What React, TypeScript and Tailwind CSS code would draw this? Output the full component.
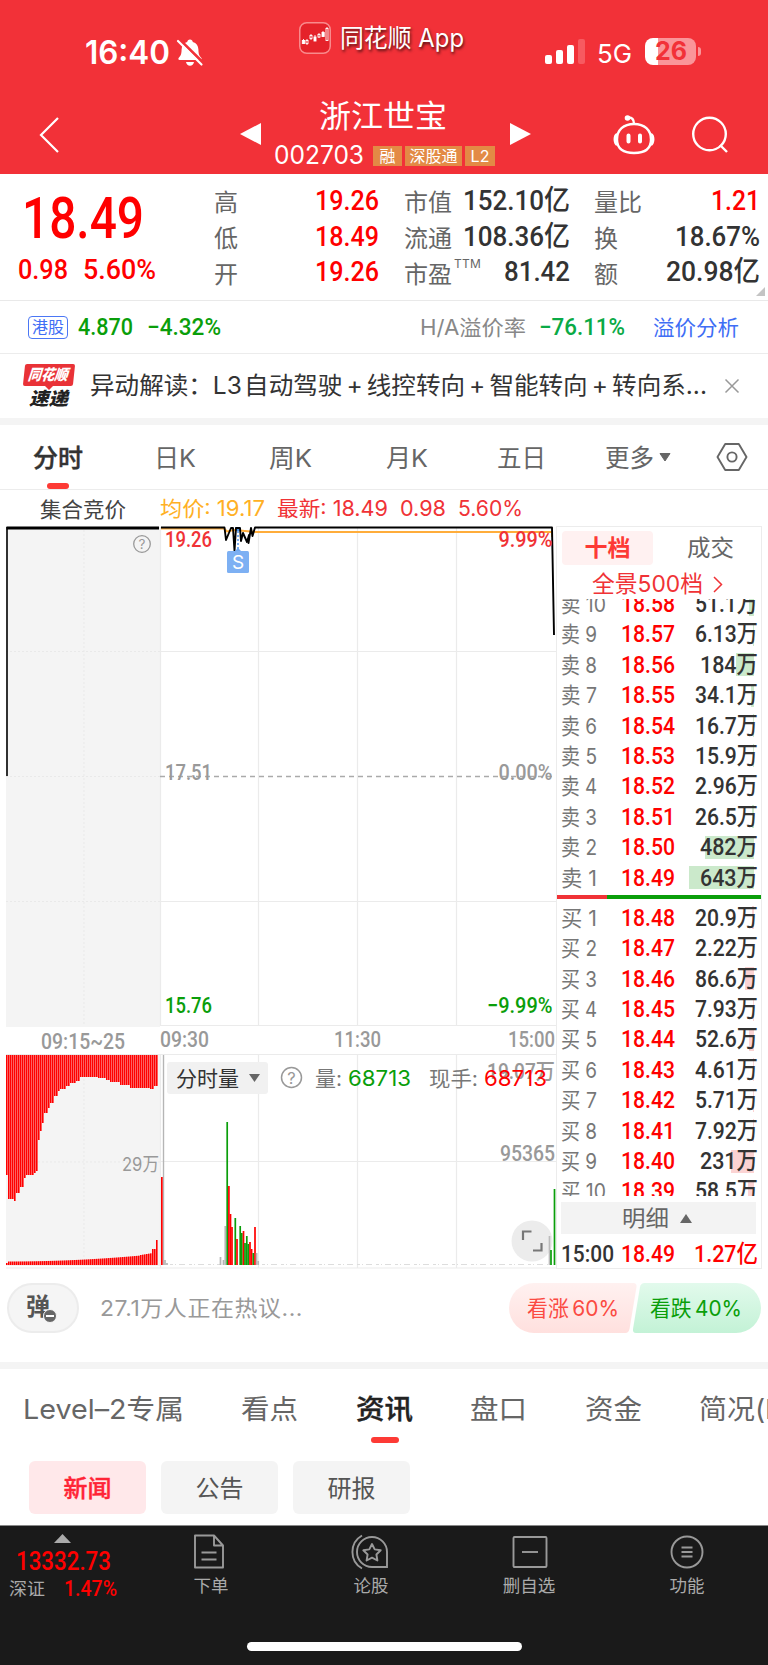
import React, { useLayoutEffect, useRef, useState } from 'react';

const NUM = "font-['Roboto','Noto_Sans_CJK_SC',sans-serif] font-medium";

// Squeezes a single line of text to the width of its box
const Fit: React.FC<{ className?: string; children: React.ReactNode }> = ({ className = '', children }) => {
    const box = useRef<HTMLDivElement>(null);
    const text = useRef<HTMLSpanElement>(null);
    const [scale, setScale] = useState(1);

    useLayoutEffect(() => {
        if (box.current && text.current && text.current.offsetWidth > 0) {
            setScale(box.current.clientWidth / text.current.getBoundingClientRect().width);
        }
    }, []);

    return (
        <div ref={box} className={`shrink-0 whitespace-pre ${className}`}>
            <span ref={text} className="inline-block origin-left" style={{ transform: `scaleX(${scale})` }}>
                {children}
            </span>
        </div>
    );
};

const StatusBar = () => (
    <div className="flex h-[90px] items-start text-white">
        <Fit className="ml-[85px] mt-[36px] w-[85px] text-[32px] leading-[34px] font-semibold">16:40</Fit>
        <svg className="ml-[6px] mt-[37px] shrink-0" width="28" height="30" viewBox="0 0 28 30">
            <path d="M14 2.5c1.6 0 2.6 1 2.8 2.4 3.700 1 5.500 4 5.600 7.600.1 5 .9 6.300 2.800 8.200.9.900.5 2.300-.9 2.300H3.700c-1.400 0-1.800-1.400-.9-2.300 1.900-1.900 2.700-3.200 2.800-8.200.1-3.600 1.900-6.600 5.600-7.600.2-1.400 1.200-2.400 2.800-2.400z" fill="#fff" />
            <path d="M10 25h8c-.4 2.400-2 3.800-4 3.800s-3.600-1.400-4-3.800z" fill="#fff" />
            <path d="M3.500 2.500L27.500 26" stroke="#f23138" strokeWidth="3" />
            <path d="M2 4L25.500 27.500" stroke="#fff" strokeWidth="2.200" strokeLinecap="round" />
        </svg>
        <svg className="ml-[95px] mt-[22px] shrink-0" width="32" height="32" viewBox="0 0 32 32">
            <rect x="0.750" y="0.750" width="30.500" height="30.500" rx="7" fill="#e5222a" stroke="#f98a8c" strokeWidth="1.500" />
            <g fill="#fff" stroke="#fff" strokeWidth="0.900">
                <path d="M4.500 17v5M8 17v6M12 12v6M16 13v6M20 11v5M24 9v6M28 5v14" fill="none" />
                <rect x="3.300" y="18.500" width="2.400" height="3" />
                <rect x="7" y="18.500" width="2" height="3" fill="#e5222a" />
                <rect x="11" y="13.500" width="2" height="3" fill="#e5222a" />
                <rect x="15" y="15" width="2" height="4" />
                <rect x="19" y="12.500" width="2" height="2.500" fill="#e5222a" />
                <rect x="23" y="10.500" width="2.200" height="4" />
                <rect x="27" y="6.500" width="2" height="12" fill="#e5222a" />
            </g>
        </svg>
        <Fit className="ml-[9px] mt-[22px] w-[124px] text-[25px] leading-[33px] [text-shadow:1px_2px_3px_rgba(0,0,0,0.7)]">同花顺 App</Fit>
        <div className="ml-[81px] mt-[39px] flex h-[25px] shrink-0 items-end gap-[4px]">
            <span className="h-[9px] w-[7px] rounded-[2px] bg-white" />
            <span className="h-[14px] w-[7px] rounded-[2px] bg-white" />
            <span className="h-[19px] w-[7px] rounded-[2px] bg-white" />
            <span className="h-[25px] w-[7px] rounded-[2px] bg-[#f75a60]" />
        </div>
        <Fit className="ml-[12px] mt-[37px] w-[35px] text-[26px] leading-[34px]">5G</Fit>
        <div className="ml-[13px] mt-[38px] flex h-[27px] w-[51px] shrink-0 justify-center rounded-[8px] bg-[linear-gradient(90deg,#fff_26%,#fa9599_26%)]">
            <Fit className="w-[32px] text-[25px] leading-[27px] font-bold text-[#f23138]">26</Fit>
        </div>
        <div className="ml-[2px] mt-[47px] h-[9px] w-[3px] rounded-r-full bg-[#fa9599]" />
    </div>
);

const NavBar = () => (
    <div className="flex h-[84px] items-start text-white">
        <svg className="ml-[38px] mt-[26px] shrink-0" width="22" height="38" viewBox="0 0 22 38">
            <path d="M20 2L3 19l17 17" fill="none" stroke="#fff" strokeWidth="2.200" />
        </svg>
        <svg className="ml-[180px] mt-[33px] shrink-0" width="21" height="22" viewBox="0 0 21 22">
            <path d="M0 11L21 0v22z" fill="#fff" />
        </svg>
        <div className="ml-[13px] mt-[7px] w-[222px] shrink-0">
            <Fit className="ml-[45px] w-[128px] text-[31px] leading-[38px]">浙江世宝</Fit>
            <div className="mt-[8px] flex items-center gap-[3px] text-[16px] leading-[20px]">
                <Fit className="mr-[6px] w-[90px] text-[25px] leading-[25px]">002703</Fit>
                <div className="flex h-[20px] w-[29px] justify-center bg-[#e38a45]">融</div>
                <div className="flex h-[20px] w-[57px] justify-center bg-[#e38a45]">深股通</div>
                <div className="flex h-[20px] w-[30px] justify-center bg-[#e38a45]">L2</div>
            </div>
        </div>
        <svg className="ml-[14px] mt-[33px] shrink-0" width="21" height="22" viewBox="0 0 21 22">
            <path d="M21 11L0 0v22z" fill="#fff" />
        </svg>
        <svg className="ml-[81px] mt-[24px] shrink-0" width="44" height="42" viewBox="0 0 44 42" fill="none" stroke="#fff" strokeWidth="2.400">
            <path d="M22 10c10.500 0 17 6 17 15.500S32.500 39 22 39 5 35 5 25.500 11.500 10 22 10z" />
            <path d="M5 20c-3 1.500-3 9 0 11M39 20c3 1.500 3 9 0 11" />
            <path d="M22 10c0-4.500-2-7-6-6.500" />
            <circle cx="15.500" cy="4" r="1.600" fill="#fff" />
            <path d="M16.500 21.500v6M28 21.500v6" strokeWidth="4" strokeLinecap="round" />
        </svg>
        <svg className="ml-[35px] mt-[26px] shrink-0" width="40" height="40" viewBox="0 0 40 40" fill="none" stroke="#fff" strokeWidth="2.400">
            <circle cx="18.500" cy="18" r="16.300" />
            <path d="M29 29l7 7" />
        </svg>
    </div>
);

const QuotePanel = () => (
    <div className="flex h-[127px] border-b border-[#e9e9e9] text-[24px] text-[#666]">
        <div className="w-[200px] shrink-0 text-[#f00]">
            <Fit className={`ml-[22px] mt-[16px] h-[58px] w-[122px] text-[57px] leading-[58px] ${NUM}`}>18.49</Fit>
            <div className={`flex h-[44px] text-[28px] leading-[43px] ${NUM}`}>
                <Fit className="ml-[18px] w-[50px]">0.98</Fit>
                <Fit className="ml-[15px] w-[73px]">5.60%</Fit>
            </div>
        </div>
        <div className="ml-[14px] mt-[10.500px] w-[24px] shrink-0 leading-[36px]">
            <div>高</div><div>低</div><div>开</div>
        </div>
        <div className={`ml-[77px] mt-[9px] shrink-0 text-[28px] leading-[35.700px] text-[#f00] ${NUM}`}>
            <Fit className="w-[64px]">19.26</Fit>
            <Fit className="w-[64px]">18.49</Fit>
            <Fit className="w-[64px]">19.26</Fit>
        </div>
        <div className="ml-[25px] mt-[10.500px] shrink-0 leading-[36px]">
            <div className="w-[49px]">市值</div>
            <div className="w-[49px]">流通</div>
            <div className="flex w-[49px] whitespace-nowrap">
                市盈<span className="ml-[2px] text-[12px] leading-[14px] tracking-wide">TTM</span>
            </div>
        </div>
        <div className={`ml-[9px] mt-[9px] flex w-[108px] shrink-0 flex-col items-end text-[28px] leading-[35.700px] text-[#333] ${NUM}`}>
            <Fit className="w-[107px]">152.10亿</Fit>
            <Fit className="w-[107px]">108.36亿</Fit>
            <Fit className="w-[66px]">81.42</Fit>
        </div>
        <div className="ml-[24px] mt-[10.500px] w-[49px] shrink-0 leading-[36px]">
            <div>量比</div><div>换</div><div>额</div>
        </div>
        <div className={`ml-[17px] mt-[9px] flex w-[100px] shrink-0 flex-col items-end text-[28px] leading-[35.700px] text-[#333] ${NUM}`}>
            <Fit className="w-[49px] text-[#f00]">1.21</Fit>
            <Fit className="w-[85px]">18.67%</Fit>
            <Fit className="w-[94px]">20.98亿</Fit>
        </div>
        <svg className="mb-[4px] ml-[-4px] shrink-0 self-end" width="9" height="9" viewBox="0 0 9 9">
            <path d="M9 0v9H0z" fill="#c4c4c4" />
        </svg>
    </div>
);

const PremiumRow = () => (
    <div className="flex h-[53px] items-center border-b border-[#ececec] text-[21px] leading-[51px]">
        <div className="ml-[28px] flex h-[23px] w-[40px] shrink-0 items-center justify-center rounded-[4px] border border-[#4b77f5] text-[16px] leading-[21px] text-[#3f6ef5]">港股</div>
        <Fit className={`ml-[10px] w-[55px] text-[24px] text-[#0a9e0a] ${NUM}`}>4.870</Fit>
        <Fit className={`ml-[14px] w-[74px] text-[24px] text-[#0a9e0a] ${NUM}`}>−4.32%</Fit>
        <Fit className="ml-[199px] w-[106px] text-[#888]">H/A溢价率</Fit>
        <Fit className={`ml-[13px] w-[86px] text-[24px] text-[#0aaa46] ${NUM}`}>−76.11%</Fit>
        <Fit className="ml-[28px] w-[86px] text-[#3f6ef5]">溢价分析</Fit>
    </div>
);

const NewsRow = () => (
    <div className="flex h-[64px] items-center">
        <div className="ml-[22px] flex h-[44px] w-[53px] shrink-0 flex-col items-center">
            <div className="flex h-[22px] w-[50px] -skew-x-6 justify-center rounded-[2px] bg-[#e93237]">
                <Fit className="w-[42px] text-[15px] leading-[22px] font-black text-white italic">同花顺</Fit>
            </div>
            <svg className="shrink-0" width="8" height="4" viewBox="0 0 8 4"><path d="M0 0h8L4 4z" fill="#e93237" /></svg>
            <Fit className="mt-[-1px] w-[39px] text-[18px] leading-[19px] font-black text-[#222] italic">速递</Fit>
        </div>
        <Fit className="ml-[15px] w-[617px] text-[24px] leading-[60px] text-[#333]">{'异动解读：L3\u200a自动驾驶\u2006+\u2006线控转向\u2006+\u2006智能转向\u2006+\u2006转向系...'}</Fit>
        <svg className="ml-[17px] shrink-0" width="16" height="16" viewBox="0 0 16 16">
            <path d="M1.500 1.500l13 13M14.500 1.500l-13 13" stroke="#999" strokeWidth="1.500" />
        </svg>
    </div>
);

const PeriodTabs = () => (
    <div className="flex h-[65px] items-start border-b border-[#ececec] text-[24.500px] leading-[66px] text-[#666]">
        <div className="ml-[33px] w-[50px] shrink-0 text-[#333]">
            <Fit className="h-[58px] w-[50px] font-medium [-webkit-text-stroke:0.4px]">分时</Fit>
            <div className="mx-auto h-[6px] w-[22px] rounded-full bg-[#fd3a35]" />
        </div>
        <Fit className="ml-[71px] w-[42px]">日K</Fit>
        <Fit className="ml-[73px] w-[43px]">周K</Fit>
        <Fit className="ml-[74px] w-[42px]">月K</Fit>
        <Fit className="ml-[69px] w-[49px]">五日</Fit>
        <Fit className="ml-[59px] w-[49px]">更多</Fit>
        <svg className="ml-[5px] mt-[28px] shrink-0" width="12" height="9" viewBox="0 0 12 9"><path d="M1 0.500h10L6 8z" fill="#666" stroke="#666" /></svg>
        <svg className="ml-[45px] mt-[17px] shrink-0" width="32" height="30" viewBox="0 0 32 30" fill="none" stroke="#666" strokeWidth="1.900">
            <path d="M9.200 2h13.600L30.500 15l-7.700 13H9.200L1.500 15z" strokeLinejoin="round" />
            <circle cx="16" cy="15" r="4.600" />
        </svg>
    </div>
);

const LegendRow = () => (
    <div className="flex h-[36px] text-[21px] leading-[37px] text-[#f03236]">
        <Fit className="ml-[40px] mt-[1px] w-[86px] text-[#444]">集合竞价</Fit>
        <Fit className="ml-[34px] w-[105px] text-[#ffb024]">均价: 19.17</Fit>
        <Fit className="ml-[12px] w-[111px]">最新: 18.49</Fit>
        <Fit className="ml-[12px] w-[46px]">0.98</Fit>
        <Fit className="ml-[12px] w-[65px]">5.60%</Fit>
    </div>
);

// unmatched volume during the opening auction, [x, bottom]
const auction = [
    [6, 1175], [8, 1199], [13, 1201], [15, 1193], [19, 1187], [23, 1178], [25, 1175], [31, 1175], [33, 1173], [36, 1171],
    [37, 1140], [40, 1131], [42, 1123], [44, 1113], [47, 1108], [50, 1103], [53, 1096], [57, 1091], [60, 1089], [66, 1086],
    [70, 1083], [76, 1081], [80, 1077], [97, 1078], [105, 1080], [110, 1082], [119, 1085], [130, 1088], [150, 1089], [154, 1086], [157, 1077],
];
const auctionAt = (x: number) => auction.filter(p => p[0] <= x).pop()![1];
const matchedAt = (x: number) => {
    if (x < 8) return 2;
    if (x < 140) return 3.5 + ((x - 8) / 132) ** 2 * 6;
    if (x < 152) return 10 + (x - 140) / 6;
    return x < 155 ? 16 : 25;
};
const auctionXs = Array.from({ length: 76 }, (_, i) => 6 + i * 2);

// [x, top, colour]
const volumes: [number, number, string][] = [
    [220.5, 1257, '#b5b5b5'], [223.5, 1260, '#b5b5b5'], [225.3, 1226, '#b5b5b5'], [227.2, 1122, '#0a9e0a'],
    [228.9, 1186, '#f00'], [230.5, 1214, '#f00'], [232, 1227, '#f00'], [235.3, 1218, '#0a9e0a'], [237, 1239, '#f00'],
    [240.2, 1226, '#0a9e0a'], [241.8, 1233, '#0a9e0a'], [243.5, 1231, '#f00'], [245, 1243, '#0a9e0a'], [246.8, 1236, '#0a9e0a'],
    [248.3, 1244, '#0a9e0a'], [250, 1242, '#f00'], [251.6, 1249, '#f00'], [253.3, 1253, '#0a9e0a'], [255, 1227, '#f00'],
    [256.6, 1253, '#b5b5b5'], [258.2, 1261, '#b5b5b5'], [165, 1260, '#b5b5b5'], [167, 1263, '#b5b5b5'], [549.5, 1236, '#bbb'], [551, 1250, '#0a9e0a'], [554.5, 1189, '#0a9e0a'],
];

const Label: React.FC<{ x: number; y: number; w: number; fill?: string; size?: number; bold?: boolean; children: string }> = ({
    x, y, w, fill = '#999', size = 22, bold = true, children,
}) => (
    <text x={x} y={y} fill={fill} fontSize={size} textLength={w} lengthAdjust="spacingAndGlyphs" className={bold ? NUM : ''}>
        {children}
    </text>
);

const Chart = () => (
    <svg className="shrink-0" width="556" height="743" viewBox="0 526 556 743">
        <rect x="6" y="527" width="154" height="500" fill="#f4f4f4" />
        <rect x="6" y="1055" width="154" height="211" fill="#f4f4f4" />
        <path d="M84 530V1026M84 1055V1265M6 651.500H160M6 776.500H160M6 901.500H160M6 1162H160" stroke="#e9e9e9" strokeDasharray="2 2" />
        <path d="M160.500 527V1026M258.500 527V1026M357.500 527V1026M456.500 527V1026M160 651.500H556M160 901.500H556M160 1025.500H556M6 1054.500H556M258.500 1055V1268M357.500 1055V1268M456.500 1055V1268M160.500 1055V1268M160 1161.500H556M6 1268H556" stroke="#ebebeb" strokeWidth="1.200" />
        <path d="M160 776.500H556" stroke="#aaa" strokeWidth="1.400" strokeDasharray="5 4" />

        <path d="M7 776V527.700H158" fill="none" stroke="#000" strokeWidth="1.600" />
        <path d="M6.500 528H159" stroke="#000" strokeWidth="3" />
        <path d="M161 528.500H224L227 531.500 234 530 256 532H552V537" fill="none" stroke="#ffad3b" strokeWidth="2" />
        <rect x="235" y="527" width="5" height="4" fill="#4a90e2" />
        <path d="M238 531V550" stroke="#7db0f3" strokeWidth="2" strokeDasharray="2 2" />
        <path d="M161 527.500H224.500L226 540 231 528 233 528 234.500 551 236 528 240 528 241 541 243 533 247 542 249 535 248.500 543 251 528 252.500 536 255 527.500H552L554 635" fill="none" stroke="#000" strokeWidth="1.900" strokeLinejoin="round" />
        <path d="M234 552l4-4 4 4z" fill="#6ea8f0" />
        <rect x="227" y="551" width="22" height="22" rx="1.500" fill="#7db0f3" />
        <text x="238" y="569" fill="#fff" fontSize="19" textAnchor="middle">S</text>

        <circle cx="142" cy="544" r="8.300" fill="none" stroke="#999" strokeWidth="1.300" />
        <text x="142" y="549" fill="#999" fontSize="13.500" textAnchor="middle">?</text>

        <Label x={165} y={547} w={47} fill="#f03236">19.26</Label>
        <Label x={498.5} y={547} w={54} fill="#f03236">9.99%</Label>
        <Label x={165} y={780} w={47}>17.51</Label>
        <Label x={498.5} y={780} w={54}>0.00%</Label>
        <Label x={165} y={1013} w={47} fill="#0a9e0a">15.76</Label>
        <Label x={487} y={1013} w={65.5} fill="#0a9e0a">−9.99%</Label>
        <Label x={41} y={1048.5} w={84}>09:15~25</Label>
        <Label x={160} y={1047} w={49}>09:30</Label>
        <Label x={334} y={1047} w={47}>11:30</Label>
        <Label x={508} y={1047} w={47}>15:00</Label>

        {auctionXs.map(x => (
            <g key={x} fill="#f00">
                <rect x={x} y={1055} width="1.600" height={auctionAt(x) - 1055} />
                <rect x={x} y={1265 - matchedAt(x)} width="1.600" height={matchedAt(x)} />
            </g>
        ))}
        <Label x={122} y={1171} w={37} size={19} bold={false}>29万</Label>

        <path d="M163.500 1055V1265" stroke="#b5b5b5" strokeWidth="1.400" />
        <rect x="161" y="1177" width="1.700" height="88" fill="#f00" />
        <path d="M170 1264.500H220M262 1264.500H548" stroke="#ddd" strokeDasharray="3 2 1 3 6 4" />

        <rect x="167" y="1062" width="101" height="32" rx="3" fill="#f1f1f1" />
        <Label x={176} y={1085.5} w={63} fill="#333" size={21} bold={false}>分时量</Label>
        <path d="M249 1074h11l-5.500 8z" fill="#666" />
        <circle cx="291.500" cy="1077.500" r="10" fill="none" stroke="#999" strokeWidth="1.500" />
        <text x="291.500" y="1083.500" fill="#999" fontSize="16.500" textAnchor="middle">?</text>
        <Label x={315} y={1085.5} w={27} fill="#777" size={21} bold={false}>量:</Label>
        <Label x={348} y={1085.5} w={63} fill="#0a9e0a" size={21.5} bold={false}>68713</Label>
        <Label x={429} y={1085.5} w={49} fill="#777" size={21} bold={false}>现手:</Label>
        <Label x={487} y={1079} w={68}>19.07万</Label>
        <Label x={484} y={1085.5} w={63} fill="#f00" size={21.5} bold={false}>68713</Label>
        <Label x={500} y={1160.5} w={55}>95365</Label>

        <circle cx="532" cy="1241" r="20.500" fill="#ececec" />
        <path d="M523 1240V1231.500H531.500M541.500 1243V1250.500H533" fill="none" stroke="#777" strokeWidth="2.200" />
        {volumes.map(([x, top, color]) => (
            <rect key={x} x={x - 0.85} y={top} width="1.700" height={1265 - top} fill={color} />
        ))}
    </svg>
);

// label, price, volume, width of the volume bar
const asks: [string, string, string, string][] = [
    ['卖 10', '18.58', '51.1万', 'w-[5px]'],
    ['卖 9', '18.57', '6.13万', 'w-[1px]'],
    ['卖 8', '18.56', '184万', 'w-[18px]'],
    ['卖 7', '18.55', '34.1万', 'w-[3px]'],
    ['卖 6', '18.54', '16.7万', 'w-[1px]'],
    ['卖 5', '18.53', '15.9万', 'w-[1px]'],
    ['卖 4', '18.52', '2.96万', 'w-0'],
    ['卖 3', '18.51', '26.5万', 'w-[2px]'],
    ['卖 2', '18.50', '482万', 'w-[49px]'],
    ['卖 1', '18.49', '643万', 'w-[65px]'],
];
const bids: [string, string, string, string][] = [
    ['买 1', '18.48', '20.9万', 'w-[2px]'],
    ['买 2', '18.47', '2.22万', 'w-0'],
    ['买 3', '18.46', '86.6万', 'w-[9px]'],
    ['买 4', '18.45', '7.93万', 'w-[1px]'],
    ['买 5', '18.44', '52.6万', 'w-[5px]'],
    ['买 6', '18.43', '4.61万', 'w-[1px]'],
    ['买 7', '18.42', '5.71万', 'w-[1px]'],
    ['买 8', '18.41', '7.92万', 'w-[1px]'],
    ['买 9', '18.40', '231万', 'w-[23px]'],
    ['买 10', '18.39', '58.5万', 'w-[6px]'],
];

const Level: React.FC<{ row: [string, string, string, string]; bar: string }> = ({ row, bar }) => (
    <div className="flex h-[30.400px] shrink-0 leading-[30.400px]">
        <Fit className={`ml-[3.500px] text-[21.500px] text-[#777] ${row[0].length > 3 ? 'w-[45px]' : 'w-[36px]'}`}>{row[0]}</Fit>
        <Fit className={`w-[54px] text-[23.500px] text-[#f00] ${row[0].length > 3 ? 'ml-[15px]' : 'ml-[24px]'} ${NUM}`}>{row[1]}</Fit>
        <div className="relative ml-[12.500px] flex w-[71px] justify-end">
            <span className={`absolute top-[3.500px] right-[4px] h-[23px] ${bar} ${row[3]}`} />
            <Fit className={`relative text-[23.500px] text-[#333] ${row[2].length > 4 ? 'w-[63px]' : 'w-[58px]'} ${NUM}`}>{row[2]}</Fit>
        </div>
    </div>
);

const OrderBook = () => (
    <div className="h-[743px] w-[206px] shrink-0 border border-[#ececec]">
        <div className="flex h-[43px] items-start pt-[4px] pl-[5px] text-[23px] leading-[34px]">
            <div className="flex w-[91px] justify-center rounded-[4px] bg-[#fff1f1] font-bold text-[#fd3a35]">十档</div>
            <Fit className="ml-[34px] w-[47px] text-[#666]">成交</Fit>
        </div>
        <div className="flex h-[29px] items-center text-[23px] leading-[29px] text-[#f03236]">
            <Fit className="ml-[35px] w-[111px]">全景500档</Fit>
            <svg className="ml-[10px]" width="10" height="17" viewBox="0 0 10 17"><path d="M1 1l7.500 7.500L1 16" fill="none" stroke="#f03236" strokeWidth="1.500" /></svg>
        </div>
        <div className="flex h-[597px] flex-col overflow-hidden">
            <div className="mt-[-10px] shrink-0">
                {asks.map(row => <Level key={row[0]} row={row} bar="bg-[#cbe9cb]" />)}
            </div>
            <div className="mt-[2px] flex h-[4px] shrink-0">
                <span className="w-[50px] bg-[#f03236]" />
                <span className="grow bg-[#0a9e0a]" />
            </div>
            <div className="mt-[4px] shrink-0">
                {bids.map(row => <Level key={row[0]} row={row} bar="bg-[#fbd3d3]" />)}
            </div>
        </div>
        <div className="mt-[6px] ml-[4px] flex h-[32px] w-[195px] items-center bg-[#f3f3f3] text-[22px] leading-[32px] text-[#666]">
            <Fit className="ml-[61px] w-[47px]">明细</Fit>
            <svg className="ml-[11px]" width="12" height="9" viewBox="0 0 12 9"><path d="M0 9L6 0l6 9z" fill="#666" /></svg>
        </div>
        <div className={`mt-[1px] flex h-[32px] text-[23.500px] leading-[38px] text-[#f00] ${NUM}`}>
            <Fit className="ml-[4px] w-[53px] text-[#333]">15:00</Fit>
            <Fit className="ml-[7px] w-[54px]">18.49</Fit>
            <Fit className="ml-[19px] w-[64px]">1.27亿</Fit>
        </div>
    </div>
);

const CommentRow = () => (
    <div className="flex h-[93px] items-start pt-[14px]">
        <div className="relative ml-[7px] h-[50px] w-[72px] shrink-0 rounded-full border-2 border-[#ececec] bg-[#f5f5f5] pl-[17px] text-[24px] leading-[44px] font-bold text-[#555]">
            弹
            <span className="absolute top-[24px] left-[34px] flex h-[14px] w-[14px] items-center justify-center rounded-full border border-[#f5f5f5] bg-[#666]">
                <span className="h-[2px] w-[8px] bg-white" />
            </span>
        </div>
        <Fit className="ml-[21px] w-[203px] text-[21.500px] leading-[50px] tracking-wide text-[#999]">27.1万人正在热议...</Fit>
        <svg className="ml-[206px] shrink-0" width="252" height="50" viewBox="0 0 252 50">
            <defs>
                <linearGradient id="up" x1="0" y1="0" x2="0" y2="1"><stop stopColor="#fff1f0" /><stop offset="1" stopColor="#ffe0de" /></linearGradient>
                <linearGradient id="down" x1="0" y1="0" x2="0" y2="1"><stop stopColor="#e2faec" /><stop offset="1" stopColor="#c3f2d6" /></linearGradient>
            </defs>
            <path d="M25 0H124q4 0 3.500 4L120.500 46q-1 4-4 4H25A25 25 0 0 1 25 0z" fill="url(#up)" />
            <path d="M135.500 0H227a25 25 0 0 1 0 50H127q-3.500 0-3-4L131 4q1-4 4.500-4z" fill="url(#down)" />
            <Label x={18} y={33} w={92} size={21.5} fill="#fb4a42" bold={false}>{'看涨\u200660%'}</Label>
            <Label x={141} y={33} w={92} size={21.5} fill="#0a9e0a" bold={false}>{'看跌\u200640%'}</Label>
        </svg>
    </div>
);

const SectionTabs = () => (
    <div className="flex h-[92px] items-start overflow-hidden text-[27.500px] leading-[81px] text-[#666]">
        <Fit className="ml-[23px] w-[161px]">Level–2专属</Fit>
        <Fit className="ml-[57px] w-[57px]">看点</Fit>
        <div className="ml-[58px] w-[57px] shrink-0">
            <Fit className="h-[68px] w-[57px] font-medium text-[#222] [-webkit-text-stroke:0.4px]">资讯</Fit>
            <div className="mx-auto h-[6px] w-[28px] rounded-full bg-[#fd3a35]" />
        </div>
        <Fit className="ml-[57px] w-[57px]">盘口</Fit>
        <Fit className="ml-[58px] w-[57px]">资金</Fit>
        <Fit className="ml-[57px] w-[94px]">简况(F1</Fit>
    </div>
);

const BottomBar = () => (
    <div className="flex h-[140px] flex-col items-center border-t border-[#888] bg-[#1a1a1a]">
        <div className="flex h-[116px] w-full text-[17.500px] leading-[26px] text-[#aaa]">
            <div className="w-[124px] shrink-0 pt-[8px]">
                <svg className="ml-[54px]" width="17" height="9" viewBox="0 0 17 9"><path d="M0 9L8.500 0 17 9z" fill="#aaa" /></svg>
                <Fit className={`mt-[6px] ml-[16px] w-[95px] text-[25px] leading-[26px] text-[#f00] ${NUM}`}>13332.73</Fit>
                <div className="mt-[1px] flex">
                    <Fit className="ml-[9px] w-[36px]">深证</Fit>
                    <Fit className={`ml-[19px] w-[53px] text-[22px] text-[#f00] ${NUM}`}>1.47%</Fit>
                </div>
            </div>
            <div className="ml-[68px] flex w-[38px] shrink-0 flex-col items-center pt-[8px]">
                <svg className="mr-[4px]" width="34" height="36" viewBox="0 0 34 36" fill="none" stroke="#999" strokeWidth="1.900">
                    <path d="M3 1.500h19l9 10V33.500H3zM22 1.500v10h9M9.500 18.500h15M9.500 25.500h15" strokeLinejoin="round" />
                </svg>
                <div className="mt-[3px] whitespace-nowrap">下单</div>
            </div>
            <div className="ml-[122px] flex w-[38px] shrink-0 flex-col items-center pt-[8px]">
                <svg className="mr-[4px]" width="38" height="36" viewBox="0 0 38 36" fill="none" stroke="#999" strokeWidth="1.900">
                    <path d="M22 3a15 15 0 0 1 15 15v15H22a15 15 0 0 1 0-30z" />
                    <path d="M12 1.500a19 19 0 0 0 0 33" />
                    <path d="M22 10l2.700 5.400 6 .9-4.300 4.200 1 6-5.400-2.800-5.400 2.800 1-6-4.300-4.200 6-.9z" strokeLinejoin="round" />
                </svg>
                <div className="mt-[3px] whitespace-nowrap">论股</div>
            </div>
            <div className="ml-[110px] flex w-[58px] shrink-0 flex-col items-center pt-[8px]">
                <svg className="ml-[1px]" width="36" height="36" viewBox="0 0 36 36" fill="none" stroke="#999" strokeWidth="1.900">
                    <rect x="1.500" y="3" width="33" height="30" rx="1" />
                    <path d="M10 18h16" />
                </svg>
                <div className="mt-[3px] whitespace-nowrap">删自选</div>
            </div>
            <div className="ml-[110px] flex w-[38px] shrink-0 flex-col items-center pt-[8px]">
                <svg width="36" height="36" viewBox="0 0 36 36" fill="none" stroke="#999" strokeWidth="1.900">
                    <circle cx="18" cy="18" r="15.500" />
                    <path d="M12.500 13.500h11M12.500 18h11M12.500 22.500h11" />
                </svg>
                <div className="mt-[3px] whitespace-nowrap">功能</div>
            </div>
        </div>
        <div className="h-[9px] w-[275px] rounded-full bg-white" />
    </div>
);

const App: React.FC = () => (
    <div className="h-[1665px] w-[768px] overflow-hidden bg-white font-['Inter','Noto_Sans_CJK_SC',sans-serif]">
        <div className="h-[174px] bg-[#f23138]">
            <StatusBar />
            <NavBar />
        </div>
        <QuotePanel />
        <PremiumRow />
        <NewsRow />
        <div className="h-[7px] bg-[#f4f4f4]" />
        <PeriodTabs />
        <LegendRow />
        <div className="flex">
            <Chart />
            <OrderBook />
        </div>
        <CommentRow />
        <div className="h-[7px] bg-[#f4f4f4]" />
        <SectionTabs />
        <div className="flex h-[64px] gap-[15px] pl-[29px] text-[24px] leading-[55px] text-[#555]">
            <div className="h-[53px] w-[117px] rounded-[6px] bg-[#ffe8ea] text-center font-medium text-[#ff2436] [-webkit-text-stroke:0.4px]">新闻</div>
            <div className="h-[53px] w-[117px] rounded-[6px] bg-[#f4f4f4] text-center">公告</div>
            <div className="h-[53px] w-[117px] rounded-[6px] bg-[#f4f4f4] text-center">研报</div>
        </div>
        <BottomBar />
    </div>
);

export default App;
